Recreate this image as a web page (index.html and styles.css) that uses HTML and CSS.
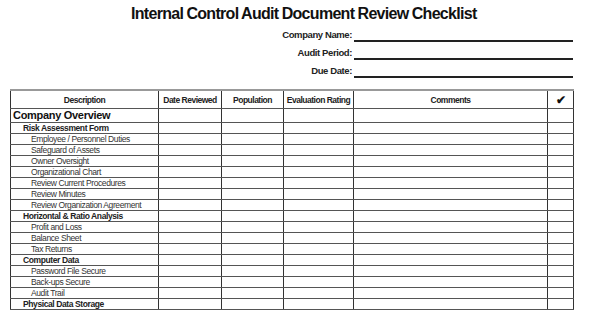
FILE: index.html
```html
<!DOCTYPE html>
<html>
<head>
<meta charset="utf-8">
<link rel="stylesheet" href="styles.css">
</head>
<body>
<div class="page">
  <h1 class="title">Internal Control Audit Document Review Checklist</h1>
  <div class="fields">
    <div class="label">Company Name:</div><div class="line"></div>
    <div class="label">Audit Period:</div><div class="line"></div>
    <div class="label">Due Date:</div><div class="line"></div>
  </div>
  <table class="sheet">
    <colgroup>
      <col class="c-desc"><col class="c-date"><col class="c-pop"><col class="c-eval"><col class="c-comm"><col class="c-chk">
    </colgroup>
    <thead>
      <tr class="head">
        <th>Description</th><th>Date Reviewed</th><th>Population</th><th>Evaluation Rating</th><th>Comments</th><th class="chk">✔</th>
      </tr>
    </thead>
    <tbody>
      <tr class="section"><td>Company Overview</td><td></td><td></td><td></td><td></td><td></td></tr>
      <tr class="sub"><td>Risk Assessment Form</td><td></td><td></td><td></td><td></td><td></td></tr>
      <tr class="item"><td>Employee / Personnel Duties</td><td></td><td></td><td></td><td></td><td></td></tr>
      <tr class="item"><td>Safeguard of Assets</td><td></td><td></td><td></td><td></td><td></td></tr>
      <tr class="item"><td>Owner Oversight</td><td></td><td></td><td></td><td></td><td></td></tr>
      <tr class="item"><td>Organizational Chart</td><td></td><td></td><td></td><td></td><td></td></tr>
      <tr class="item"><td>Review Current Procedures</td><td></td><td></td><td></td><td></td><td></td></tr>
      <tr class="item"><td>Review Minutes</td><td></td><td></td><td></td><td></td><td></td></tr>
      <tr class="item"><td>Review Organization Agreement</td><td></td><td></td><td></td><td></td><td></td></tr>
      <tr class="sub"><td>Horizontal &amp; Ratio Analysis</td><td></td><td></td><td></td><td></td><td></td></tr>
      <tr class="item"><td>Profit and Loss</td><td></td><td></td><td></td><td></td><td></td></tr>
      <tr class="item"><td>Balance Sheet</td><td></td><td></td><td></td><td></td><td></td></tr>
      <tr class="item"><td>Tax Returns</td><td></td><td></td><td></td><td></td><td></td></tr>
      <tr class="sub"><td>Computer Data</td><td></td><td></td><td></td><td></td><td></td></tr>
      <tr class="item"><td>Password File Secure</td><td></td><td></td><td></td><td></td><td></td></tr>
      <tr class="item"><td>Back-ups Secure</td><td></td><td></td><td></td><td></td><td></td></tr>
      <tr class="item"><td>Audit Trail</td><td></td><td></td><td></td><td></td><td></td></tr>
      <tr class="sub"><td>Physical Data Storage</td><td></td><td></td><td></td><td></td><td></td></tr>
    </tbody>
  </table>
</div>
</body>
</html>
```
FILE: styles.css
```css
html, body {
  margin: 0;
  padding: 0;
  background: #fff;
  overflow: hidden;
}
.page {
  width: 592px;
  height: 310px;
  overflow: hidden;
  font-family: "Liberation Sans", Arial, sans-serif;
  color: #111;
}
.title {
  margin: 0;
  padding: 4px 0 0 131px;
  height: 20px;
  font-size: 16px;
  line-height: 20px;
  font-weight: bold;
  white-space: nowrap;
  letter-spacing: -0.7px;
  word-spacing: -0.5px;
}
.fields {
  display: grid;
  grid-template-columns: 352px 219px;
  column-gap: 2px;
  margin-top: 2px;
}
.label {
  text-align: right;
  font-size: 9.5px;
  font-weight: bold;
  height: 18px;
  line-height: 17px;
  letter-spacing: -0.4px;
  color: #222;
}
.line {
  border-bottom: 2px solid #222;
  height: 14px;
}
.sheet {
  margin: 9px 0 0 10px;
  border-collapse: collapse;
  table-layout: fixed;
  width: 563px;
}
.c-desc { width: 148px; }
.c-date { width: 63px; }
.c-pop { width: 62px; }
.c-eval { width: 70px; }
.c-comm { width: 194px; }
.c-chk { width: 26px; }
.sheet th, .sheet td {
  border-left: 1px solid #333;
  border-right: 1px solid #333;
  border-top: 1px solid #555;
  border-bottom: 1px solid #555;
  padding: 0;
  white-space: nowrap;
  overflow: hidden;
  color: #222;
}
.head th {
  height: 16px;
  padding-top: 1px;
  font-size: 8.5px;
  font-weight: bold;
  text-align: center;
  letter-spacing: -0.5px;
  border-top: 2px solid #999;
}
.head th.chk {
  font-size: 12px;
  line-height: 12px;
  padding-top: 0;
  color: #111;
}
.section td {
  height: 13px;
  font-size: 11px;
  line-height: 13px;
  font-weight: bold;
  padding-left: 2px;
  letter-spacing: -0.3px;
  color: #111;
}
.sub td, .item td {
  height: 10px;
  font-size: 8.5px;
  line-height: 10px;
}
.sub td:first-child {
  font-weight: bold;
  padding-left: 12px;
  letter-spacing: -0.4px;
}
.item td:first-child {
  padding-left: 20px;
  letter-spacing: -0.4px;
  color: #333;
}
```
